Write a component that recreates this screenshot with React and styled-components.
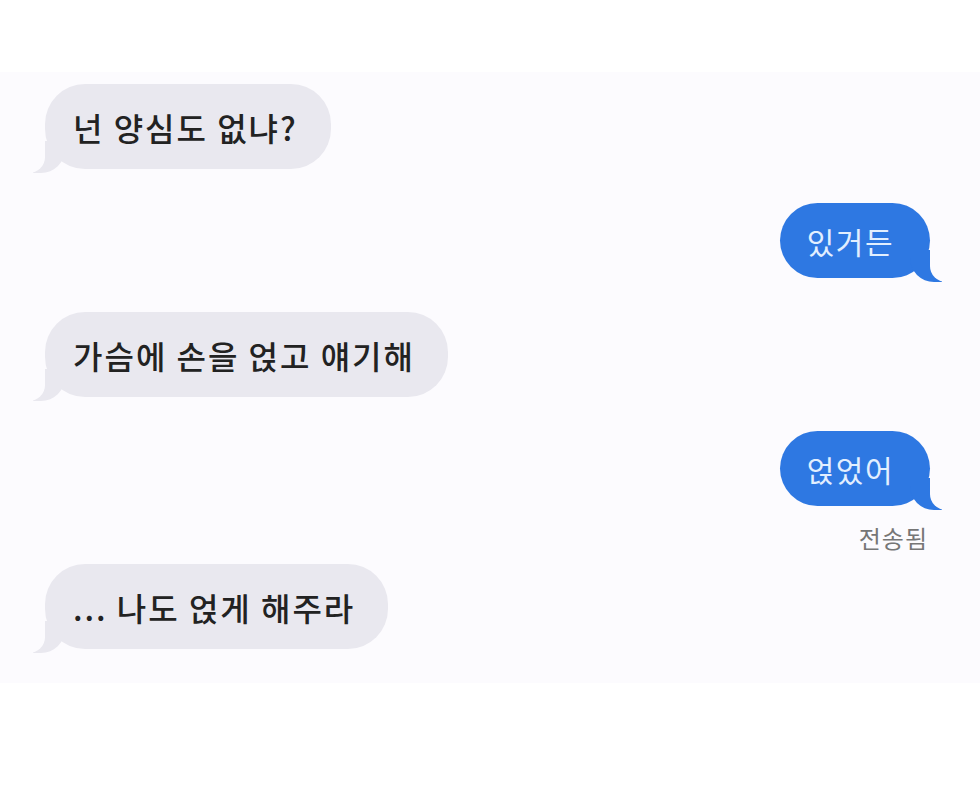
import React from 'react'
import styled, { createGlobalStyle } from 'styled-components'

const messages = [
  { id: 1, mine: false, text: '넌 양심도 없냐?' },
  { id: 2, mine: true, text: '있거든' },
  { id: 3, mine: false, text: '가슴에 손을 얹고 얘기해' },
  { id: 4, mine: true, text: '얹었어', status: '전송됨' },
  { id: 5, mine: false, text: '... 나도 얹게 해주라' },
]

function App() {
  return (
    <>
      <GlobalStyle />
      <Page>
        <Thread>
          {messages.map((m) => (
            <Row key={m.id} mine={m.mine}>
              <Bubble mine={m.mine}>{m.text}</Bubble>
              {m.status && <Status>{m.status}</Status>}
            </Row>
          ))}
        </Thread>
      </Page>
    </>
  )
}

const PANEL = '#fcfbfe'
const MEDIUM = '"Noto Sans CJK KR Medium", "Noto Sans CJK KR", "Noto Sans", sans-serif'
const REGULAR = '"Noto Sans CJK KR", "Noto Sans", sans-serif'

const GlobalStyle = createGlobalStyle`
    html, body {
        margin: 0;
        padding: 0;
        background: #ffffff;
        font-family: ${REGULAR};
    }
`

const Page = styled.div`
    width: 980px;
    height: 790px;
    padding-top: 72px;
    box-sizing: border-box;
    background: #ffffff;
`

const Thread = styled.div`
    background: ${PANEL};
    height: 611px;
    padding: 12px 50px 0 45px;
    box-sizing: border-box;
    display: flex;
    flex-direction: column;
    gap: 34px;
`

const Row = styled.div`
    display: flex;
    flex-direction: column;
    align-items: ${(props) => (props.mine ? 'flex-end' : 'flex-start')};
`

const Bubble = styled.div`
    position: relative;
    box-sizing: border-box;
    height: ${(props) => (props.mine ? 75 : 85)}px;
    padding: ${(props) => (props.mine ? '0 36px 0 27px' : '0 33px 0 28px')};
    display: flex;
    align-items: center;
    border-radius: 40px;
    font-family: ${(props) => (props.mine ? REGULAR : MEDIUM)};
    font-size: ${(props) => (props.mine ? 30 : 32)}px;
    font-weight: 400;
    letter-spacing: ${(props) => (props.mine ? 1.5 : 2)}px;
    color: ${(props) => (props.mine ? '#e2efff' : '#222222')};
    background: ${(props) => (props.mine ? '#2e78e2' : '#e9e8ef')};
    white-space: nowrap;

    &::before {
        content: "";
        position: absolute;
        bottom: -4px;
        ${(props) => (props.mine ? 'right: -12px;' : 'left: -12px;')}
        width: 32px;
        height: 32px;
        background: ${(props) => (props.mine ? '#2e78e2' : '#e9e8ef')};
        ${(props) =>
          props.mine ? 'border-bottom-left-radius: 24px;' : 'border-bottom-right-radius: 24px;'}
    }

    &::after {
        content: "";
        position: absolute;
        bottom: -4px;
        ${(props) => (props.mine ? 'right: -26px;' : 'left: -26px;')}
        width: 26px;
        height: 36px;
        background: ${PANEL};
        ${(props) =>
          props.mine ? 'border-bottom-left-radius: 16px;' : 'border-bottom-right-radius: 16px;'}
    }
`

const Status = styled.div`
    margin: 20px 2px -20px 0;
    line-height: 24px;
    font-size: 24px;
    color: #767676;
    letter-spacing: 1px;
`

export default App
